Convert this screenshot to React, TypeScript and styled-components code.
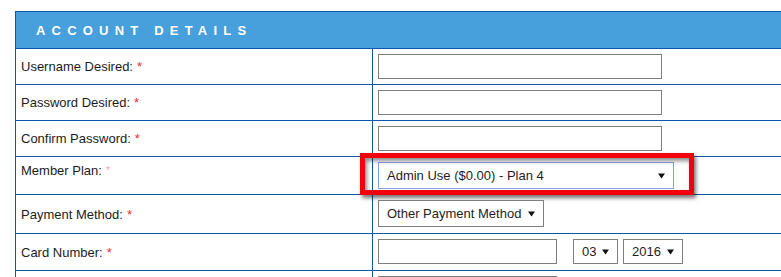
import React from "react";
import styled, { createGlobalStyle } from "styled-components";

const GlobalStyle = createGlobalStyle`
  html, body {
    margin: 0;
    padding: 0;
    background: #ffffff;
    overflow: hidden;
  }
  body {
    font-family: "Liberation Sans", Arial, sans-serif;
  }
`;

const Page = styled.div`
  padding: 11px 0 0 15px;
`;

const FormTable = styled.div`
  width: 800px;
  border-left: 1px solid #0a58a4;
  border-top: 1px solid #0a58a4;
`;

const Header = styled.div`
  height: 37px;
  box-sizing: border-box;
  background: #47a0db;
  border-bottom: 1px solid #0a58a4;
  display: flex;
  align-items: center;
  padding-left: 20px;
  color: #ffffff;
  font-size: 13px;
  font-weight: bold;
  letter-spacing: 6.2px;
`;

const Row = styled.div<{ $h: number }>`
  display: flex;
  height: ${(p) => p.$h}px;
  box-sizing: border-box;
  border-bottom: 1px solid #0a58a4;
`;

const LabelCell = styled.div<{ $top?: boolean }>`
  width: 357px;
  flex: none;
  box-sizing: border-box;
  border-right: 1px solid #0a58a4;
  padding: ${(p) => (p.$top ? "6px 5px 0" : "0 5px")};
  display: flex;
  align-items: ${(p) => (p.$top ? "flex-start" : "center")};
  font-size: 13px;
  color: #1c1c1c;
`;

const Star = styled.span<{ $faint?: boolean }>`
  color: ${(p) => (p.$faint ? "#f4a3ab" : "#ee2b2b")};
  font-size: ${(p) => (p.$faint ? "10px" : "13px")};
  margin-left: 4px;
  ${(p) => (p.$faint ? "margin-top: 2px;" : "")}
`;

const ValueCell = styled.div`
  position: relative;
  flex: 1;
  display: flex;
  align-items: flex-start;
  gap: 16px;
  padding: 5px 5px 0;
`;

const TextBox = styled.div<{ $w: number; $h?: number }>`
  width: ${(p) => p.$w}px;
  height: ${(p) => p.$h ?? 25}px;
  box-sizing: border-box;
  border: 1px solid #7f7f7f;
  background: #ffffff;
`;

const SelectBox = styled.div<{ $w: number; $h: number; $focus?: boolean }>`
  width: ${(p) => p.$w}px;
  height: ${(p) => p.$h}px;
  box-sizing: border-box;
  border: 1px solid ${(p) => (p.$focus ? "#7fa6e2" : "#7f7f7f")};
  background: #ffffff;
  display: flex;
  align-items: center;
  justify-content: space-between;
  padding: 0 8px 0 8px;
  font-size: 13px;
  color: #1e1e1e;
`;

const SmallGroup = styled.div`
  display: flex;
  gap: 5px;
`;

const Highlight = styled.div`
  position: absolute;
  left: -13px;
  top: -4px;
  width: 334px;
  height: 42px;
  box-sizing: border-box;
  border: 5px solid #f2000a;
  box-shadow: 2px 3px 4px rgba(0, 0, 0, 0.55),
    inset 2px 3px 4px rgba(0, 0, 0, 0.45);
  pointer-events: none;
`;

const Arrow = () => (
  <svg width="7" height="6" viewBox="0 0 7 6">
    <path d="M0 0.5 L7 0.5 L3.5 5.5 Z" fill="#111111" />
  </svg>
);

const Label: React.FC<{ text: string; top?: boolean; faint?: boolean }> = ({
  text,
  top,
  faint,
}) => (
  <LabelCell $top={top}>
    {text}
    <Star $faint={faint}>*</Star>
  </LabelCell>
);

export default function App() {
  return (
    <>
      <GlobalStyle />
      <Page>
        <FormTable>
          <Header>ACCOUNT DETAILS</Header>
          <Row $h={36}>
            <Label text="Username Desired:" />
            <ValueCell>
              <TextBox $w={284} />
            </ValueCell>
          </Row>
          <Row $h={36}>
            <Label text="Password Desired:" />
            <ValueCell>
              <TextBox $w={284} />
            </ValueCell>
          </Row>
          <Row $h={36}>
            <Label text="Confirm Password:" />
            <ValueCell>
              <TextBox $w={284} />
            </ValueCell>
          </Row>
          <Row $h={38}>
            <Label text="Member Plan:" top faint />
            <ValueCell>
              <SelectBox $w={296} $h={27} $focus>
                <span>Admin Use ($0.00) - Plan 4</span>
                <Arrow />
              </SelectBox>
              <Highlight />
            </ValueCell>
          </Row>
          <Row $h={39}>
            <Label text="Payment Method:" />
            <ValueCell>
              <SelectBox $w={166} $h={27}>
                <span>Other Payment Method</span>
                <Arrow />
              </SelectBox>
            </ValueCell>
          </Row>
          <Row $h={37}>
            <Label text="Card Number:" />
            <ValueCell>
              <TextBox $w={179} $h={25} />
              <SmallGroup>
                <SelectBox $w={45} $h={25}>
                  <span>03</span>
                  <Arrow />
                </SelectBox>
                <SelectBox $w={60} $h={25}>
                  <span>2016</span>
                  <Arrow />
                </SelectBox>
              </SmallGroup>
            </ValueCell>
          </Row>
          <Row $h={7}>
            <LabelCell />
            <ValueCell>
              <TextBox $w={179} $h={2} />
            </ValueCell>
          </Row>
        </FormTable>
      </Page>
    </>
  );
}
